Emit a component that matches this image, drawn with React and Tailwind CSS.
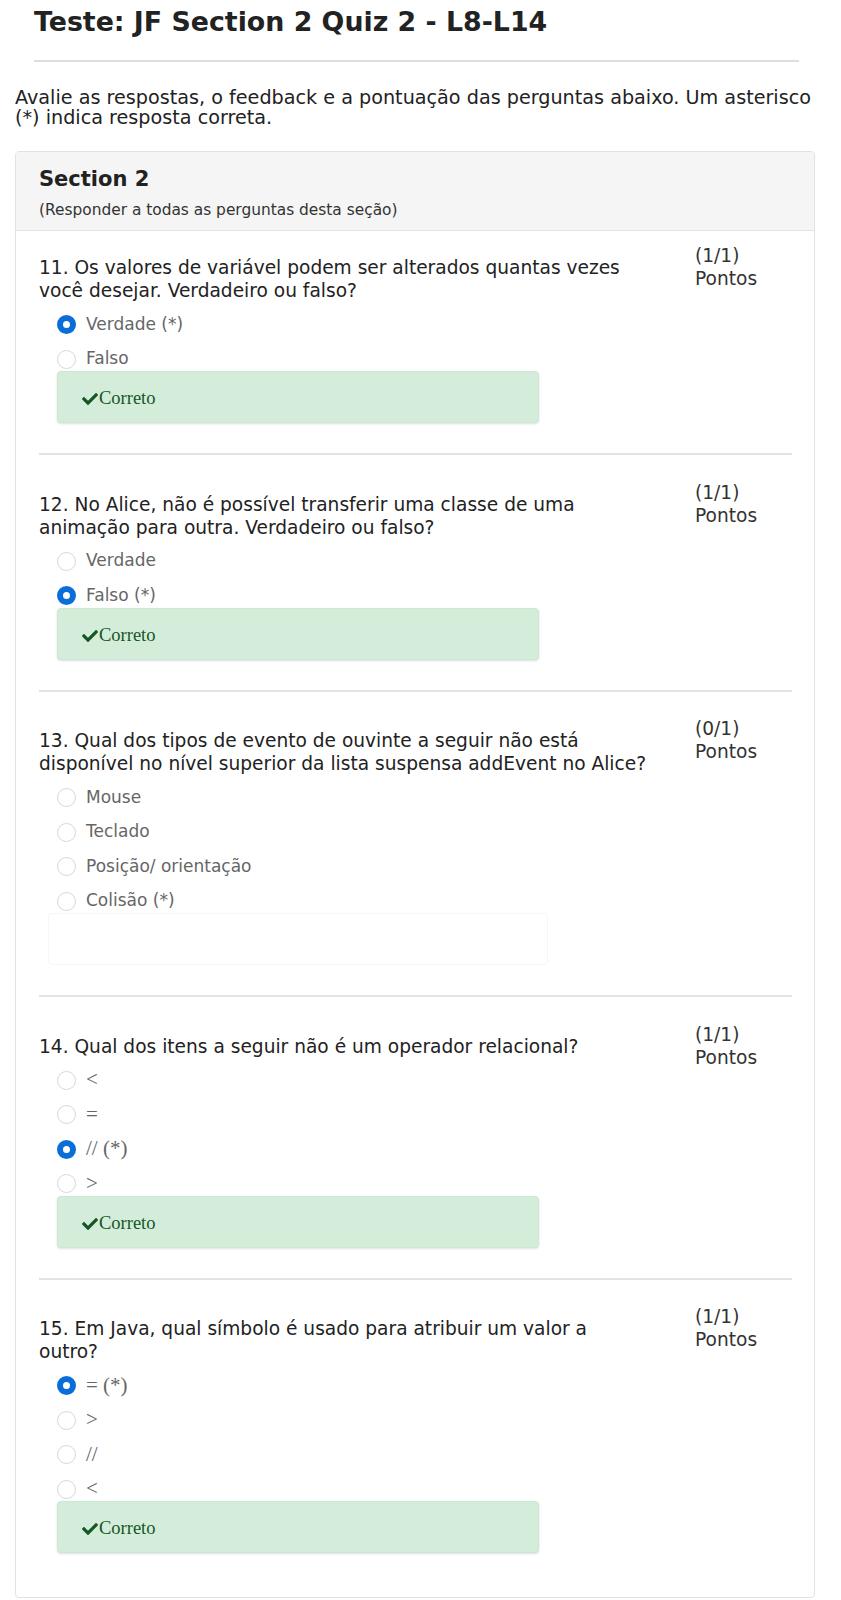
import { FaCheck } from 'react-icons/fa';

// each question text is split into the lines the reference shows
const questions = [
  {
    n: 11,
    lines: ['11. Os valores de variável podem ser alterados quantas vezes', 'você desejar. Verdadeiro ou falso?'],
    score: '(1/1)',
    options: ['Verdade (*)', 'Falso'],
    selected: 0,
    feedback: true,
  },
  {
    n: 12,
    lines: ['12. No Alice, não é possível transferir uma classe de uma', 'animação para outra. Verdadeiro ou falso?'],
    score: '(1/1)',
    options: ['Verdade', 'Falso (*)'],
    selected: 1,
    feedback: true,
  },
  {
    n: 13,
    lines: [
      '13. Qual dos tipos de evento de ouvinte a seguir não está',
      'disponível no nível superior da lista suspensa addEvent no Alice?',
    ],
    score: '(0/1)',
    options: ['Mouse', 'Teclado', 'Posição/ orientação', 'Colisão (*)'],
    selected: -1,
    feedback: false,
  },
  {
    n: 14,
    lines: ['14. Qual dos itens a seguir não é um operador relacional?'],
    score: '(1/1)',
    options: ['<', '=', '// (*)', '>'],
    selected: 2,
    feedback: true,
    serif: true,
  },
  {
    n: 15,
    lines: ['15. Em Java, qual símbolo é usado para atribuir um valor a', 'outro?'],
    score: '(1/1)',
    options: ['= (*)', '>', '//', '<'],
    selected: 0,
    feedback: true,
    serif: true,
  },
];

const Radio = ({ checked }) =>
  checked ? (
    <span className="w-[19px] h-[19px] rounded-full border-[6px] border-[#0b6ed8] bg-white shrink-0" />
  ) : (
    <span className="w-[19px] h-[19px] rounded-full border border-[#d8d8d8] bg-white shrink-0" />
  );

const Question = ({ q }) => (
  <div className="flex items-start">
    <div className="w-[620px] shrink-0">
      <p className="mt-[12px] text-[18.6px] leading-[23px] text-[#222] whitespace-nowrap">
        {q.lines.map((l, i) => (
          <span key={i} className="block">
            {l}
          </span>
        ))}
      </p>

      <div className="mt-[10.5px] flex flex-col gap-[10.5px] pl-[18px]">
        {q.options.map((opt, i) => (
          <label key={i} className="h-[24px] flex items-center gap-[10px]">
            <Radio checked={i === q.selected} />
            <span
              className={
                q.serif
                  ? "font-['Liberation_Serif',serif] text-[21px] text-[#666]"
                  : 'text-[17px] text-[#666]'
              }
            >
              {opt}
            </span>
          </label>
        ))}
      </div>

      {q.feedback ? (
        <div className="ml-[18px] w-[482px] h-[52px] rounded-[4px] bg-[#d4edda] border border-[#cbe8d3] shadow-sm flex items-center pl-[24px] pt-[4px] font-['Liberation_Serif',serif] text-[18.5px] text-[#155724]">
          <FaCheck className="w-[16px] h-[16px] mr-[1px]" />
          <span>Correto</span>
        </div>
      ) : (
        <div className="ml-[9px] w-[500px] h-[52px] rounded-[4px] border border-[#f6f6f6]" />
      )}
    </div>

    <div className="ml-[36px] text-[18.6px] leading-[23px] text-[#333]">
      <div>{q.score}</div>
      <div>Pontos</div>
    </div>
  </div>
);

export default function App() {
  return (
    <div className="bg-white min-h-[1600px] font-['DejaVu_Sans',Verdana,sans-serif] text-[#222]">
      <h1 className="pt-[7px] px-[34px] text-[26.8px] leading-[30px] font-bold text-[#222]">
        Teste: JF Section 2 Quiz 2 - L8-L14
      </h1>
      <div className="mx-[34px] mr-[42px] mt-[23px] h-[2px] bg-[#dedede]" />

      <p className="mt-[25.5px] px-[15px] text-[19.2px] leading-[20.5px] text-[#222] whitespace-nowrap">
        <span className="block">
          Avalie as respostas, o feedback e a pontuação das perguntas abaixo. Um asterisco
        </span>
        <span className="block">(*) indica resposta correta.</span>
      </p>

      <div className="mt-[22px] ml-[15px] mr-[26px] border border-[#e2e2e2] rounded-[4px] overflow-hidden">
        <div className="bg-[#f5f5f5] border-b border-[#e2e2e2] pt-[15px] pb-[11px] pl-[23px]">
          <h2 className="text-[21px] leading-[24px] font-bold text-[#222]">Section 2</h2>
          <p className="mt-[10px] text-[15.4px] leading-[18px] text-[#333]">
            (Responder a todas as perguntas desta seção)
          </p>
        </div>

        <div className="pt-[13.5px] pb-[44px] pl-[23px] pr-[22px]">
          {questions.map((q, i) => (
            <div key={q.n}>
              <Question q={q} />
              {i < questions.length - 1 && (
                <div className="mt-[30px] mb-[25.5px] h-[2px] bg-[#e3e3e3]" />
              )}
            </div>
          ))}
        </div>
      </div>
    </div>
  );
}
